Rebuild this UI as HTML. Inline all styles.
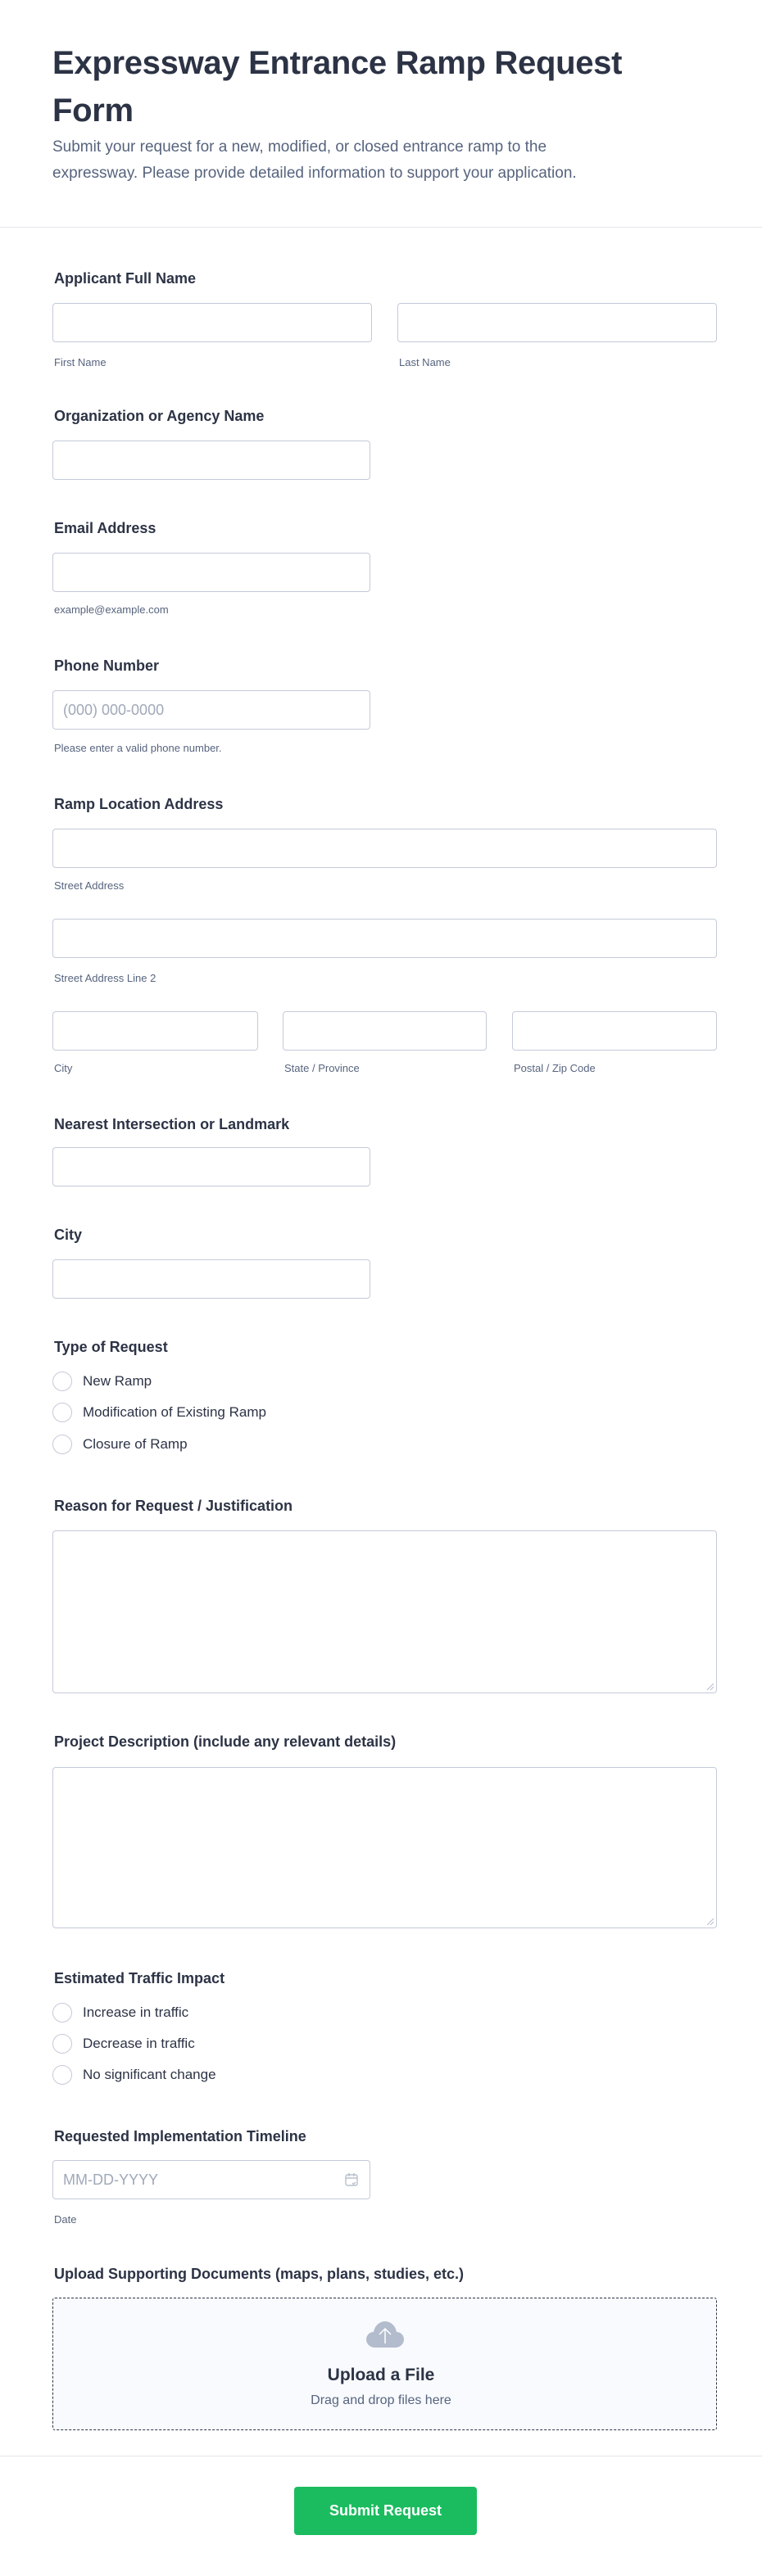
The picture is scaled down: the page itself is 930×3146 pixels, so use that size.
<!DOCTYPE html>
<html><head><meta charset="utf-8"><style>
*{box-sizing:border-box;margin:0;padding:0}
body{width:930px;height:3146px;background:#fff;font-family:"Liberation Sans",Arial,sans-serif;position:relative;overflow:hidden;color:#2c3345}
.a{position:absolute}
.t{line-height:1;white-space:nowrap}
h1{position:absolute;left:64px;top:48px;font-size:40px;line-height:58px;font-weight:700;color:#2c3345;letter-spacing:-0.3px}
.sub{left:64px;top:164px;font-size:19px;line-height:32px;color:#57647e;white-space:nowrap}
.lb{font-size:18px;font-weight:600;color:#2c3345;left:66px}
.in{border:1px solid #c3cad8;border-radius:4px;background:#fff;height:48px}
.sl{font-size:13px;color:#57647e}
.r{width:24px;height:24px;border:1.5px solid #c3cad8;border-radius:50%;left:64px}
.rt{font-size:17px;color:#2c3345;left:101px}
.hr{left:0;width:930px;height:1px;background:#e3e6ec}
.rs{position:absolute;right:3px;bottom:3px;width:8px;height:8px;background:linear-gradient(135deg,transparent 45%,#b8bfcc 45%,#b8bfcc 55%,transparent 55%,transparent 70%,#b8bfcc 70%,#b8bfcc 80%,transparent 80%)}
</style></head><body>
<h1>Expressway Entrance Ramp Request<br>Form</h1>
<div class="a sub">Submit your request for a new, modified, or closed entrance ramp to the<br>expressway. Please provide detailed information to support your application.</div>
<div class="a hr" style="top:277px"></div>

<div class="a t lb" style="top:331px">Applicant Full Name</div>
<div class="a in" style="left:64px;top:370px;width:390px"></div>
<div class="a in" style="left:485px;top:370px;width:390px"></div>
<div class="a t sl" style="left:66px;top:436px">First Name</div>
<div class="a t sl" style="left:487px;top:436px">Last Name</div>

<div class="a t lb" style="top:499px">Organization or Agency Name</div>
<div class="a in" style="left:64px;top:538px;width:388px"></div>

<div class="a t lb" style="top:636px">Email Address</div>
<div class="a in" style="left:64px;top:675px;width:388px"></div>
<div class="a t sl" style="left:66px;top:738px">example@example.com</div>

<div class="a t lb" style="top:804px">Phone Number</div>
<div class="a in" style="left:64px;top:843px;width:388px"></div>
<div class="a t" style="left:77px;top:858px;font-size:18px;color:#a0a8b8">(000) 000-0000</div>
<div class="a t sl" style="left:66px;top:907px">Please enter a valid phone number.</div>

<div class="a t lb" style="top:973px">Ramp Location Address</div>
<div class="a in" style="left:64px;top:1012px;width:811px"></div>
<div class="a t sl" style="left:66px;top:1075px">Street Address</div>
<div class="a in" style="left:64px;top:1122px;width:811px"></div>
<div class="a t sl" style="left:66px;top:1188px">Street Address Line 2</div>
<div class="a in" style="left:64px;top:1235px;width:251px"></div>
<div class="a in" style="left:345px;top:1235px;width:249px"></div>
<div class="a in" style="left:625px;top:1235px;width:250px"></div>
<div class="a t sl" style="left:66px;top:1298px">City</div>
<div class="a t sl" style="left:347px;top:1298px">State / Province</div>
<div class="a t sl" style="left:627px;top:1298px">Postal / Zip Code</div>

<div class="a t lb" style="top:1364px">Nearest Intersection or Landmark</div>
<div class="a in" style="left:64px;top:1401px;width:388px"></div>

<div class="a t lb" style="top:1499px">City</div>
<div class="a in" style="left:64px;top:1538px;width:388px"></div>

<div class="a t lb" style="top:1636px">Type of Request</div>
<div class="a r" style="top:1675px"></div><div class="a t rt" style="top:1678px">New Ramp</div>
<div class="a r" style="top:1713px"></div><div class="a t rt" style="top:1716px">Modification of Existing Ramp</div>
<div class="a r" style="top:1752px"></div><div class="a t rt" style="top:1755px">Closure of Ramp</div>

<div class="a t lb" style="top:1830px">Reason for Request / Justification</div>
<div class="a in" style="left:64px;top:1869px;width:811px;height:199px"><div class="rs"></div></div>

<div class="a t lb" style="top:2118px">Project Description (include any relevant details)</div>
<div class="a in" style="left:64px;top:2158px;width:811px;height:197px"><div class="rs"></div></div>

<div class="a t lb" style="top:2407px">Estimated Traffic Impact</div>
<div class="a r" style="top:2446px"></div><div class="a t rt" style="top:2449px">Increase in traffic</div>
<div class="a r" style="top:2484px"></div><div class="a t rt" style="top:2487px">Decrease in traffic</div>
<div class="a r" style="top:2522px"></div><div class="a t rt" style="top:2525px">No significant change</div>

<div class="a t lb" style="top:2600px">Requested Implementation Timeline</div>
<div class="a in" style="left:64px;top:2638px;width:388px"></div>
<div class="a t" style="left:77px;top:2653px;font-size:18px;color:#a0a8b8">MM-DD-YYYY</div>
<svg class="a" style="left:420px;top:2653px" width="18" height="18" viewBox="0 0 18 18" fill="none" stroke="#b8bfcc" stroke-width="1.4"><rect x="2" y="3" width="14" height="13" rx="2"/><path d="M2 7h14M6 1v4M12 1v4M10 13l1.5 1.5L14 12"/></svg>
<div class="a t sl" style="left:66px;top:2704px">Date</div>

<div class="a t lb" style="top:2768px">Upload Supporting Documents (maps, plans, studies, etc.)</div>
<div class="a" style="left:64px;top:2806px;width:811px;height:162px;border:1px dashed #2c3345;border-radius:3px;background:#f8fafe"></div>
<svg class="a" style="left:446px;top:2834px" width="48" height="34" viewBox="0 0 48 34"><path d="M12 33C5 33 1 28 1 23c0-5 4-9 9-9 1-7 7-13 14-13s13 6 14 13c5 0 9 4 9 9s-4 10-11 10z" fill="#b3bccd"/><path d="M24 28V10M17 17l7-7 7 7" stroke="#fff" stroke-width="1.5" fill="none"/></svg>
<div class="a t" style="left:0;width:930px;text-align:center;top:2890px;font-size:21px;font-weight:700;color:#2c3345">Upload a File</div>
<div class="a t" style="left:0;width:930px;text-align:center;top:2924px;font-size:16px;color:#57647e">Drag and drop files here</div>

<div class="a hr" style="top:2999px"></div>
<div class="a" style="left:359px;top:3037px;width:223px;height:59px;background:#1bbc5f;border-radius:4px;color:#fff;font-size:18px;font-weight:600;text-align:center;line-height:59px">Submit Request</div>
</body></html>
